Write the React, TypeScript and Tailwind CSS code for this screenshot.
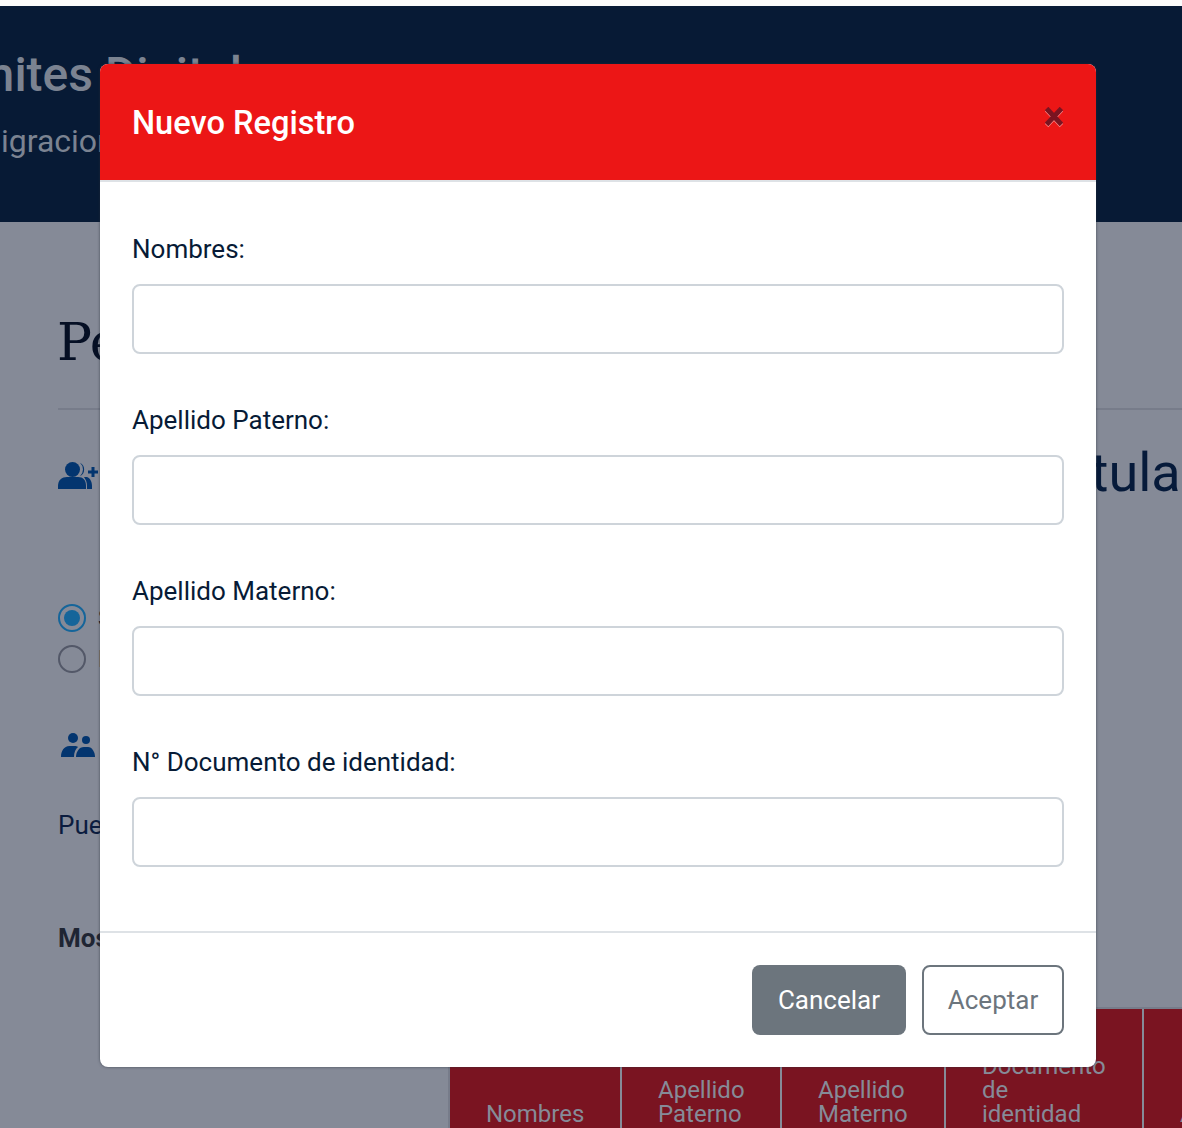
const fields = ["Nombres:", "Apellido Paterno:", "Apellido Materno:", "N° Documento de identidad:"];

const columns = [
  { width: "w-[172px]", lines: ["Nombres"] },
  { width: "w-[160px]", lines: ["Apellido", "Paterno"] },
  { width: "w-[164px]", lines: ["Apellido", "Materno"] },
  { width: "w-[198px]", lines: ["N°", "Documento", "de", "identidad"] },
  { width: "w-[120px]", lines: ["Acciones"] },
];

function UserPlusIcon() {
  return (
    <svg viewBox="0 0 40 27" className="h-[27px] w-[40px] fill-[#03356f]">
      <circle cx="14.500" cy="7.500" r="7.500" />
      <path d="M0 27v-3c0-6 4-9 9-9h11c5 0 8 3 8 9v3z" />
      <path d="M22 .8a7.500 7.500 0 0 1 0 13.400 9 9 0 0 0 0-13.400z" />
      <path d="M29 15c3 1 5 4.500 5 9v3h-5v-3c0-3.500-1-6-3-9z" />
      <path d="M33.500 5h3v3.500h3.500v3h-3.500v3.500h-3v-3.500h-3.500v-3h3.500z" />
    </svg>
  );
}

function UsersIcon() {
  return (
    <svg viewBox="0 0 34 24" className="h-[24px] w-[34px] fill-[#03356f]">
      <circle cx="12" cy="5" r="5" />
      <circle cx="25" cy="7" r="4" />
      <path d="M0 24c0-6 3-11 8.500-11h5c1.500 0 2.500.4 3.500 1-2.500 2-4 5.500-4 10z" />
      <path d="M15 24c0-5 3-10 8-10h4c4 0 7 5 7 10z" />
    </svg>
  );
}

function Background() {
  return (
    <div className="flex h-full w-full flex-col bg-[#858a97]">
      <div className="h-[6px] shrink-0 bg-[#fbfbfb]" />
      <header className="flex h-[216px] shrink-0 flex-col bg-[#071a35] pt-[40px] text-[#7b8391]">
        <h1 className="ml-[-97px] whitespace-nowrap text-[48px] font-medium leading-[58px]">Trámites Digitales</h1>
        <p className="ml-[-27px] mt-[18px] whitespace-nowrap text-[32px] leading-[38px]">Migraciones</p>
      </header>
      <main className="flex flex-col px-[58px]">
        <h2 className="ml-[-1px] mt-[85px] font-['DejaVu_Serif',serif] text-[52px] leading-[70px] text-[#050f24]">Personas</h2>
        <hr className="mt-[31px] w-[1124px] shrink-0 border-t-2 border-[#777c8a]" />
        <div className="mt-[26px] flex h-[80px] w-[1124px] shrink-0 items-start justify-between">
          <div className="mt-[26px]">
            <UserPlusIcon />
          </div>
          <span className="mr-[-60px] whitespace-nowrap text-[54px] leading-[74px] text-[#061a3a]">Titulado</span>
        </div>
        <div className="mt-[88px] flex flex-col gap-[13px]">
          <div className="flex h-[28px] items-center gap-[12px]">
            <span className="flex h-[28px] w-[28px] items-center justify-center rounded-full border-2 border-[#15659a]">
              <span className="h-[16px] w-[16px] rounded-full bg-[#15659a]" />
            </span>
            <span className="text-[24px] text-[#050f24]">Sí</span>
          </div>
          <div className="flex h-[28px] items-center gap-[12px]">
            <span className="h-[28px] w-[28px] rounded-full border-2 border-[#535868]" />
            <span className="text-[24px] text-[#050f24]">No</span>
          </div>
        </div>
        <div className="ml-[3px] mt-[60px]">
          <UsersIcon />
        </div>
        <p className="mt-[49px] whitespace-nowrap text-[26px] leading-[38px] text-[#0b1c3f]">Puede agregar personas</p>
        <p className="mt-[75px] whitespace-nowrap text-[26px] font-bold leading-[38px] text-[#1f2533]">Mostrar</p>
        <div className="ml-[390px] mt-[50px] flex h-[140px] w-[820px] shrink-0 border-l-2 border-t-2 border-[#777c8a] bg-[#7a1421] text-[24px] leading-[24px] text-[#868b98]">
          {columns.map((column) => (
            <div
              key={column.lines.join(" ")}
              className={`${column.width} flex shrink-0 flex-col justify-start border-r-2 border-[#868b98] pl-[36px]`}
            >
              <div className="mt-auto pb-[21px]">
                {column.lines.map((line) => (
                  <div key={line}>{line}</div>
                ))}
              </div>
            </div>
          ))}
        </div>
      </main>
    </div>
  );
}

export default function App() {
  return (
    <div className="relative h-[1128px] w-[1182px] overflow-hidden font-['Roboto',sans-serif]">
      <Background />
      <div className="absolute left-[100px] top-[64px] flex w-[996px] flex-col overflow-hidden rounded-[8px] bg-white shadow-[0_0_3px_rgba(40,45,60,0.7)]">
        <div className="flex h-[118px] shrink-0 items-start justify-between border-b-2 border-[#dee2e6] bg-[#ec1616] px-[32px]">
          <h3 className="mt-[36px] text-[32.6px] font-medium leading-[46px] text-white">Nuevo Registro</h3>
          <button className="mr-[1px] mt-[43px]">
            <svg viewBox="0 0 18 20" className="h-[20px] w-[18px] drop-shadow-[0_1px_0_#f88]">
              <path d="M1.500 1.500 16.500 17.500M16.500 1.500 1.500 17.500" stroke="#7a1421" strokeWidth="5" fill="none" />
            </svg>
          </button>
        </div>
        <form className="flex flex-col px-[32px] pb-[64.4px] pt-[52px]">
          {fields.map((field, index) => (
            <div key={field} className={index < fields.length - 1 ? "mb-[51.4px]" : ""}>
              <label className="mb-[12px] block h-[38px] text-[26px] leading-[30px] text-[#071b36]">{field}</label>
              <input className="block h-[69.6px] w-[932px] rounded-[8px] border-2 border-[#ced4da] bg-white" />
            </div>
          ))}
        </form>
        <div className="flex h-[136px] items-start justify-end gap-[16px] border-t-2 border-[#dee2e6] px-[32px] pt-[32px]">
          <button className="h-[70px] w-[154px] rounded-[8px] bg-[#6c757d] pt-[1px] text-[26px] text-white">Cancelar</button>
          <button className="h-[70px] w-[142px] rounded-[8px] border-2 border-[#6c757d] bg-white pt-[1px] text-[26px] text-[#6c757d]">Aceptar</button>
        </div>
      </div>
    </div>
  );
}
